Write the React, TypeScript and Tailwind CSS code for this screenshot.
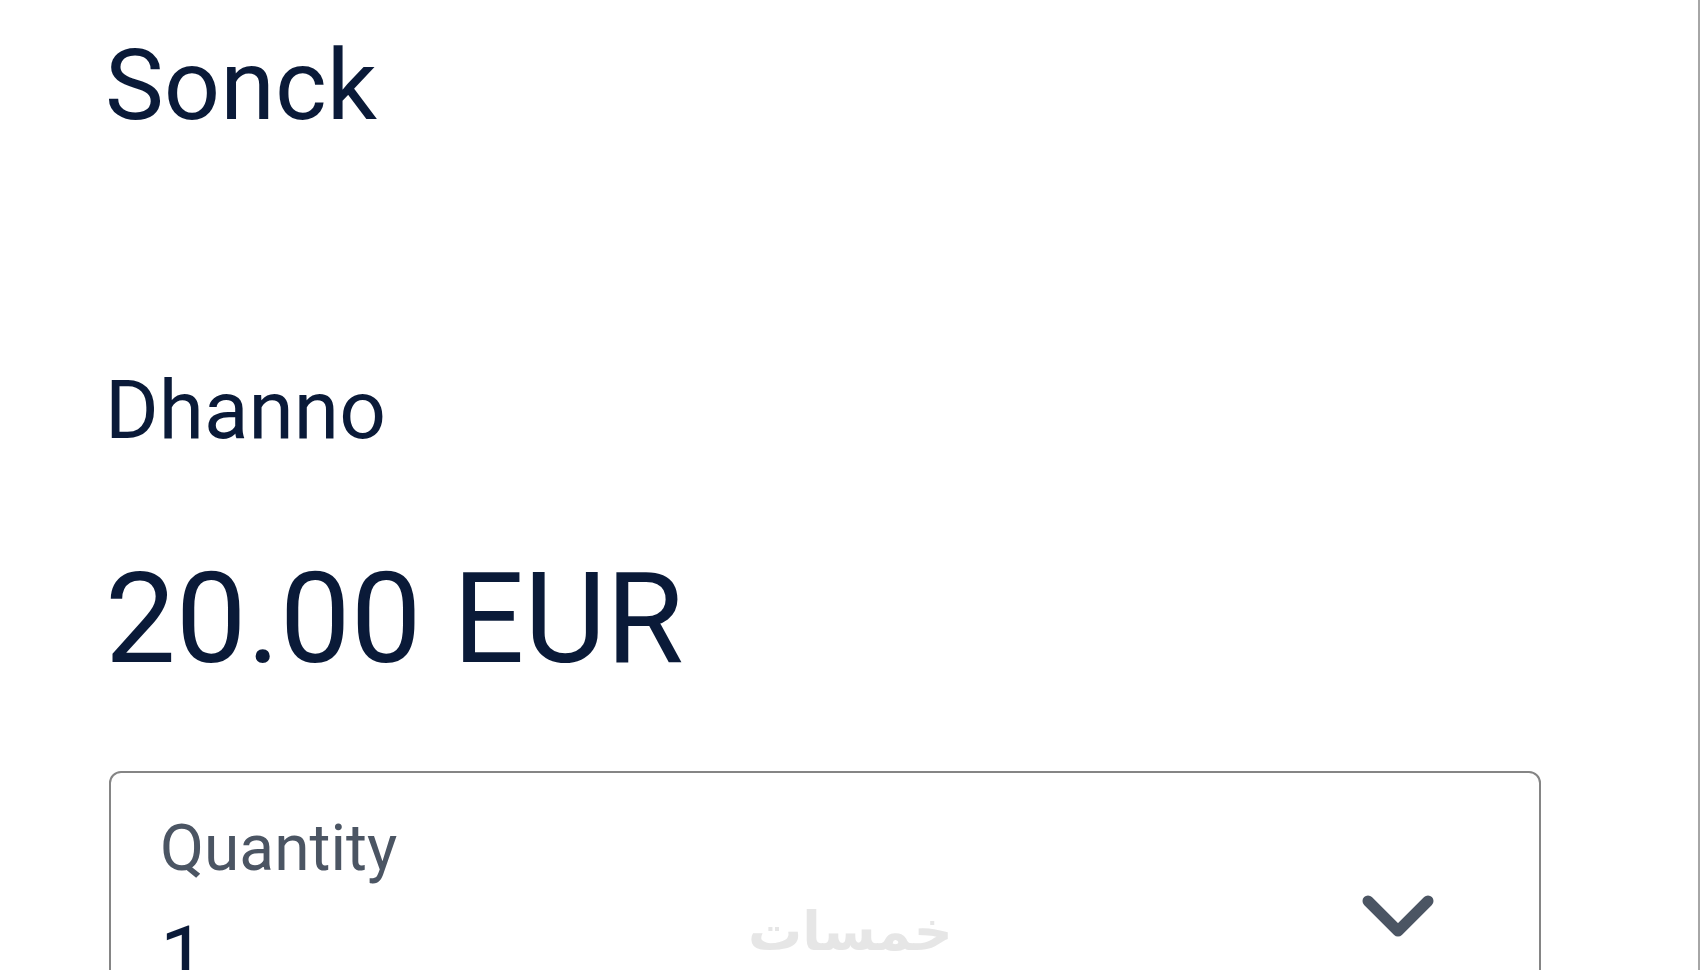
import { ChevronDown } from 'lucide-react';

export default function App() {
    return (
        <div className="w-[1700px] h-[970px] overflow-hidden bg-white flex font-['Roboto',sans-serif] text-[#0a1a38]">
            <div className="relative w-[1698px] h-full flex flex-col">
                {/* header bar sits just above the viewport, only its shadow shows */}
                <div className="w-[1650px] h-[2px] bg-white shadow-[0_6px_18px_rgba(0,0,0,0.07)] rounded-b-[20px]" />

                <div className="flex flex-col pl-[105px] pr-[157px]">
                    <h1 className="mt-[36px] text-[99px] leading-none font-normal">Sonck</h1>
                    <p className="mt-[234px] text-[82px] leading-none">Dhanno</p>
                    <p className="mt-[105px] text-[126px] leading-none">20.00 EUR</p>

                    <div className="mt-[89px] ml-[4px] h-[260px] rounded-[12px] border-2 border-[#858585] flex items-start justify-between pl-[49px] pr-[81px]">
                        <div className="flex flex-col">
                            <span className="mt-[44px] text-[64px] leading-none text-[#4b5563]">Quantity</span>
                            <span className="mt-[34px] text-[82px] leading-none">1</span>
                        </div>
                        <ChevronDown className="mt-[83px] w-[120px] h-[120px] text-[#4b5563]" strokeWidth={2.2} />
                    </div>
                </div>

                <span
                    dir="rtl"
                    className="absolute left-[748px] top-[905px] text-[54px] leading-none text-[#e6e6e6] font-['DejaVu_Sans',sans-serif] font-bold"
                >
                    خمسات
                </span>
            </div>
            <div className="w-[2px] h-full bg-[#a6a6a6]" />
        </div>
    );
}
